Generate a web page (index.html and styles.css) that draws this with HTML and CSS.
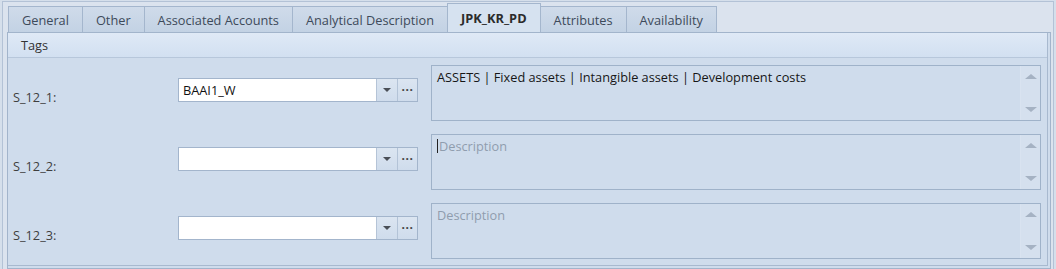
FILE: index.html
```html
<!DOCTYPE html>
<html lang="en">
<head>
    <meta charset="UTF-8">
    <title>JPK_KR_PD</title>
    <link rel="stylesheet" href="styles.css">
</head>
<body>

    <div class="frame">
        <div class="tabs">
            <div class="tab">General</div>
            <div class="tab">Other</div>
            <div class="tab">Associated Accounts</div>
            <div class="tab">Analytical Description</div>
            <div class="tab active">JPK_KR_PD</div>
            <div class="tab">Attributes</div>
            <div class="tab">Availability</div>
        </div>

        <div class="panel">
            <div class="group">
                <div class="group-header">Tags</div>
                <div class="rows">
                    <!-- one row per tag: label, lookup combo, description -->
                    <div class="row">
                        <div class="label">S_12_1:</div>
                        <div class="combo">
                            <div class="combo-input">BAAI1_W</div>
                            <div class="combo-btn"><span class="arrow-down"></span></div>
                            <div class="combo-btn dots">&middot;&middot;&middot;</div>
                        </div>
                        <div class="memo">
                            <div class="memo-text">ASSETS | Fixed assets | Intangible assets | Development costs</div>
                            <div class="scroll">
                                <span class="sc-up"></span>
                                <span class="sc-down"></span>
                            </div>
                        </div>
                    </div>
                    <div class="row">
                        <div class="label">S_12_2:</div>
                        <div class="combo">
                            <div class="combo-input"></div>
                            <div class="combo-btn"><span class="arrow-down"></span></div>
                            <div class="combo-btn dots">&middot;&middot;&middot;</div>
                        </div>
                        <div class="memo">
                            <div class="memo-text empty"><span class="caret"></span>Description</div>
                            <div class="scroll">
                                <span class="sc-up"></span>
                                <span class="sc-down"></span>
                            </div>
                        </div>
                    </div>
                    <div class="row">
                        <div class="label">S_12_3:</div>
                        <div class="combo">
                            <div class="combo-input"></div>
                            <div class="combo-btn"><span class="arrow-down"></span></div>
                            <div class="combo-btn dots">&middot;&middot;&middot;</div>
                        </div>
                        <div class="memo">
                            <div class="memo-text empty">Description</div>
                            <div class="scroll">
                                <span class="sc-up"></span>
                                <span class="sc-down"></span>
                            </div>
                        </div>
                    </div>
                </div>
            </div>
        </div>
    </div>

</body>
</html>
```

FILE: styles.css
```css
* {
    box-sizing: border-box;
    margin: 0;
    padding: 0;
}

body {
    font-family: "Open Sans", "Noto Sans", sans-serif;
    font-size: 12.75px;
    color: #3c3c3c;
    background-color: #d5dfeb;
    width: 1056px;
    height: 269px;
    overflow: hidden;
}

.frame {
    margin: 1px 2px 0 2px;
    height: 268px;
    border: 1px solid #b3c2d6;
    border-bottom: none;
    background-color: #dbe3ee;
    padding-left: 4px;
    padding-right: 2px;
}

.tabs {
    display: flex;
    align-items: flex-end;
    height: 30px;
    padding-left: 1px;
}

.tab {
    height: 26px;
    padding: 0 13px;
    display: flex;
    align-items: center;
    border: 1px solid #a4b6cd;
    border-bottom: none;
    border-right: none;
    background: linear-gradient(#cfdbea, #c3d2e4);
    color: #3d4a5a;
    white-space: nowrap;
}

.tab:nth-child(7) {
    border-right: 1px solid #a4b6cd;
}

.tab.active {
    height: 29px;
    font-weight: bold;
    color: #2b2b2b;
    background: #d6e2f0;
    border: 1px solid #a4b6cd;
    border-bottom: none;
}

.tab.active + .tab {
    border-left: none;
}

.panel {
    height: 237px;
    border: 1px solid #a2b4cb;
    background-color: #cfdcec;
    padding: 0 2px 2px 0;
}

.group {
    height: 100%;
    border: 1px solid #a8b9cf;
    border-top: none;
    border-left: none;
    display: flex;
    flex-direction: column;
}

.group-header {
    height: 25px;
    padding: 0 13px;
    display: flex;
    align-items: center;
    background: linear-gradient(#dfe9f6, #d2e0f1);
    border-bottom: 1px solid #b7c7db;
    color: #333;
}

.rows {
    display: flex;
    flex-direction: column;
    gap: 13px;
    padding: 7px 6px 0 5px;
}

.row {
    display: flex;
    align-items: center;
    height: 56px;
}

.label {
    width: 165px;
    margin-top: 8px;
    color: #3e3e3e;
}

.combo {
    display: flex;
    height: 24px;
    margin-bottom: 6px;
    border: 1px solid #a3b5cc;
}

.combo-input {
    width: 198px;
    background-color: #fff;
    padding: 0 4px;
    display: flex;
    align-items: center;
    color: #111;
    border-right: 1px solid #b5c4d7;
}

.combo-btn {
    width: 20px;
    display: flex;
    align-items: center;
    justify-content: center;
    background: linear-gradient(#dbe5f1, #cfdcec);
}

.combo-btn + .combo-btn {
    border-left: 1px solid #b3c3d7;
}

.dots {
    font-weight: bold;
    font-size: 12px;
    letter-spacing: 0.5px;
    color: #444;
    padding-bottom: 1px;
}

.arrow-down {
    width: 0;
    height: 0;
    border-left: 4px solid transparent;
    border-right: 4px solid transparent;
    border-top: 4px solid #4a4f57;
}

.memo {
    flex: 1;
    height: 56px;
    margin-left: 13px;
    border: 1px solid #9fb2c9;
    display: flex;
}

.memo-text {
    flex: 1;
    padding: 2px 5px;
    color: #161616;
}

.memo-text.empty {
    color: #8f9dae;
}

.caret {
    display: inline-block;
    width: 1px;
    height: 14px;
    background-color: #222;
    vertical-align: -2px;
    margin-right: 1px;
}

.scroll {
    width: 20px;
    display: flex;
    flex-direction: column;
    align-items: center;
    justify-content: space-between;
    padding: 8px 0 8px;
    background-color: #d5e0ee;
    border-left: 1px solid #d9e3f0;
}

.sc-up, .sc-down {
    width: 0;
    height: 0;
    border-left: 6px solid transparent;
    border-right: 6px solid transparent;
}

.sc-up {
    border-bottom: 5px solid #a5b2c3;
}

.sc-down {
    border-top: 5px solid #a5b2c3;
}
```
